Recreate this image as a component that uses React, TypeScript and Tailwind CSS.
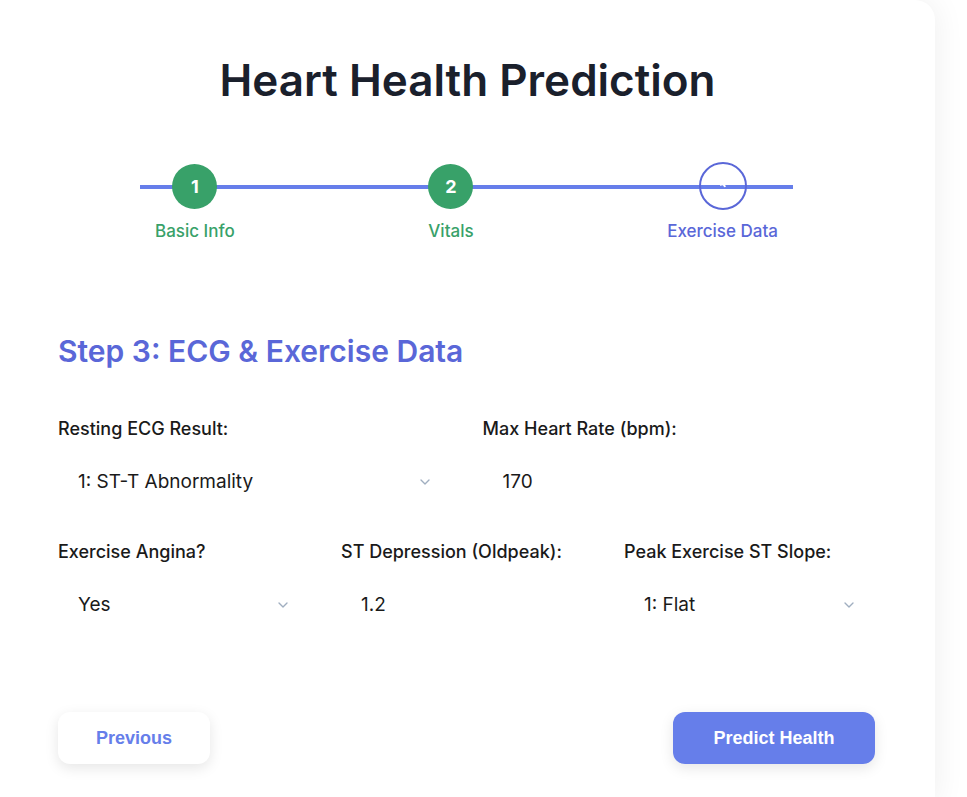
import { ChevronDown } from "lucide-react";

const steps = [
  { id: 1, label: "Basic Info", done: true },
  { id: 2, label: "Vitals", done: true },
  { id: 3, label: "Exercise Data", done: false },
];

const Field = ({
  label,
  value,
  select,
}: {
  label: string;
  value: string;
  select?: boolean;
}) => (
  <div className="flex flex-col">
    <label className="text-[18px] leading-6 font-medium text-[#1a1a1a]">{label}</label>
    <div className="mt-[17px] h-12 flex items-center justify-between pl-5 pr-5 rounded-lg bg-white">
      <span className="text-[19px] text-[#1a1a1a]">{value}</span>
      {select && <ChevronDown className="w-4 h-4 text-[#a0aec0]" strokeWidth={2} />}
    </div>
  </div>
);

export default function App() {
  return (
    <div className="min-h-screen bg-white overflow-hidden" style={{ fontFamily: "Inter, 'Noto Sans', sans-serif" }}>
      <div className="w-[935px] min-h-[797px] bg-white rounded-tr-[20px] shadow-[0_0_32px_rgba(0,0,0,0.07)] px-[58px] pt-[54px] pb-10">
        <h1 className="text-center text-[44px] leading-[52px] font-semibold text-[#1a202c]">
          Heart Health Prediction
        </h1>

        {/* stepper */}
        <div className="relative ml-[82px] mr-[84px] mt-[58px] flex justify-between">
          <div className="absolute left-0 right-0 top-[21px] h-1 bg-[#667eea]" />
          {steps.map((s) => (
            <div key={s.id} className="relative flex flex-col items-center px-[15px]">
              {s.done ? (
                <div className="w-[45px] h-[45px] rounded-full bg-[#38a169] flex items-center justify-center text-white text-[18px] font-bold">
                  {s.id}
                </div>
              ) : (
                <div className="w-[48px] h-[48px] -mt-[2px] -mb-[1px] rounded-full border-2 border-[#5a67d8] flex items-center justify-center">
                  <svg width="12" height="12" viewBox="0 0 12 12">
                    <path d="M3 5 Q7 3 8 7" stroke="white" strokeWidth="2" fill="none" />
                  </svg>
                </div>
              )}
              <span
                className={`mt-[10px] text-[17px] leading-6 font-medium ${
                  s.done ? "text-[#38a169]" : "text-[#5a67d8]"
                }`}
              >
                {s.label}
              </span>
            </div>
          ))}
        </div>

        <h2 className="mt-[90px] text-[30px] leading-9 font-semibold text-[#5a67d8]">
          Step 3: ECG &amp; Exercise Data
        </h2>

        <div className="mt-[48px] grid grid-cols-2 gap-x-[30px]">
          <Field label="Resting ECG Result:" value="1: ST-T Abnormality" select />
          <Field label="Max Heart Rate (bpm):" value="170" />
        </div>

        <div className="mt-[34px] grid grid-cols-3 gap-x-[30px]">
          <Field label="Exercise Angina?" value="Yes" select />
          <Field label="ST Depression (Oldpeak):" value="1.2" />
          <Field label="Peak Exercise ST Slope:" value="1: Flat" select />
        </div>

        <div className="mt-[83px] flex justify-between">
          <button
            className="w-[152px] h-[52px] rounded-xl bg-white shadow-[0_4px_14px_rgba(0,0,0,0.1)] text-[#667eea] text-[18px] font-bold"
            style={{ fontFamily: "'Liberation Sans', Arial, sans-serif" }}
          >
            Previous
          </button>
          <button
            className="w-[202px] h-[52px] rounded-xl bg-[#667eea] shadow-[0_4px_14px_rgba(0,0,0,0.1)] text-white text-[18px] font-bold mr-[2px]"
            style={{ fontFamily: "'Liberation Sans', Arial, sans-serif" }}
          >
            Predict Health
          </button>
        </div>
      </div>
    </div>
  );
}
